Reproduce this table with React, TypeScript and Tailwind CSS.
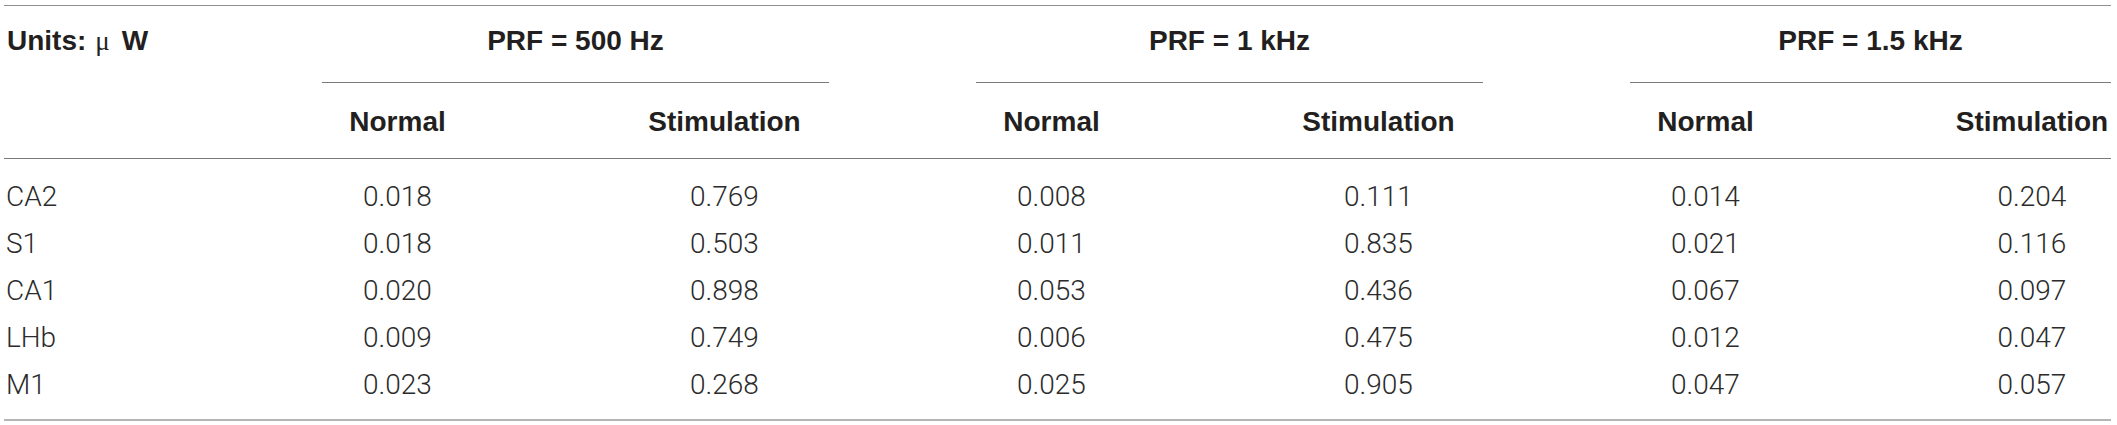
import React from "react";

const groups = ["PRF = 500 Hz", "PRF = 1 kHz", "PRF = 1.5 kHz"];

const rows: [string, string[]][] = [
  ["CA2", ["0.018", "0.769", "0.008", "0.111", "0.014", "0.204"]],
  ["S1", ["0.018", "0.503", "0.011", "0.835", "0.021", "0.116"]],
  ["CA1", ["0.020", "0.898", "0.053", "0.436", "0.067", "0.097"]],
  ["LHb", ["0.009", "0.749", "0.006", "0.475", "0.012", "0.047"]],
  ["M1", ["0.023", "0.268", "0.025", "0.905", "0.047", "0.057"]],
];

const cols = "grid grid-cols-[230px_327px_327px_327px_327px_327px_242px]";

export default function App() {
  return (
    <div className="w-[2117px] h-[425px] bg-white pl-[4px] pt-[5px] font-['Liberation_Sans',Arial,sans-serif] text-[#231f20]">
      <div className="w-[2107px] border-t border-[#8f8f8f]">
        {/* header row 1 */}
        <div className="grid grid-cols-[230px_654px_654px_569px] h-[77px]">
          <div className="pt-[21px] pl-[3px] text-[28px] leading-[28px] font-bold whitespace-nowrap flex">
            <span>Units:</span>
            <span className="ml-[9px] mr-[12px] font-normal font-['Liberation_Serif',serif] text-[27px] leading-[28px]">μ</span>
            <span>W</span>
          </div>
          {groups.map((g, i) => (
            <div key={g} className={i === 2 ? "pl-[88px] pr-0" : "pl-[88px] pr-[59px]"}>
              <div className="h-full border-b border-[#7a7a7a] flex justify-center pt-[21px] text-[28px] leading-[28px] font-bold whitespace-nowrap">
                {g}
              </div>
            </div>
          ))}
        </div>
        {/* header row 2 */}
        <div className={`${cols} h-[76px] border-b border-[#7a7a7a]`}>
          <div />
          {["Normal", "Stimulation", "Normal", "Stimulation", "Normal", "Stimulation"].map((h, i) => (
            <div
              key={i}
              className={`flex justify-center pt-[25px] text-[28px] leading-[28px] font-bold whitespace-nowrap ${i === 5 ? "pl-[84px]" : ""}`}
            >
              {h}
            </div>
          ))}
        </div>
        {/* body */}
        <div className="pt-[14px] pb-[11px] border-b-2 border-[#b5b5b5] font-['Roboto',sans-serif] font-light text-[28px] leading-[28px] text-[#2b2b2b]">
          {rows.map(([label, vals]) => (
            <div key={label} className={`${cols} h-[47px] items-center`}>
              <div className="pl-[2px]">{label}</div>
              {vals.map((v, i) => (
                <div key={i} className={`flex justify-center ${i === 5 ? "pl-[84px]" : ""}`}>
                  {v}
                </div>
              ))}
            </div>
          ))}
        </div>
      </div>
    </div>
  );
}
